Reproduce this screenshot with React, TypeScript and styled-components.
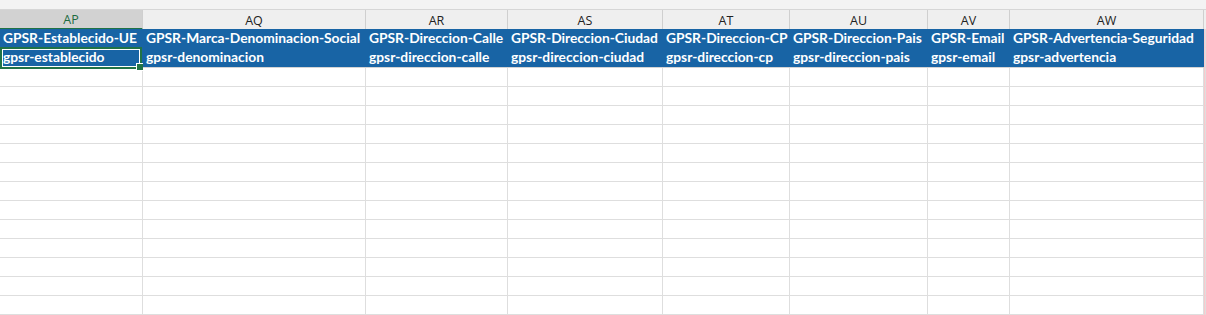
import styled, { createGlobalStyle } from 'styled-components';

const GlobalStyle = createGlobalStyle`
  html, body {
    margin: 0;
    padding: 0;
    background: #ffffff;
    overflow: hidden;
  }
`;

const columns = [
  { id: 'AP', width: 143, title: 'GPSR-Establecido-UE', key: 'gpsr-establecido' },
  { id: 'AQ', width: 223, title: 'GPSR-Marca-Denominacion-Social', key: 'gpsr-denominacion' },
  { id: 'AR', width: 142, title: 'GPSR-Direccion-Calle', key: 'gpsr-direccion-calle' },
  { id: 'AS', width: 155, title: 'GPSR-Direccion-Ciudad', key: 'gpsr-direccion-ciudad' },
  { id: 'AT', width: 127, title: 'GPSR-Direccion-CP', key: 'gpsr-direccion-cp' },
  { id: 'AU', width: 138, title: 'GPSR-Direccion-Pais', key: 'gpsr-direccion-pais' },
  { id: 'AV', width: 82, title: 'GPSR-Email', key: 'gpsr-email' },
  { id: 'AW', width: 194, title: 'GPSR-Advertencia-Seguridad', key: 'gpsr-advertencia' },
];

const template = columns.map((c) => `${c.width}px`).join(' ') + ' 1fr';

const Sheet = styled.div`
  width: 1206px;
  height: 315px;
  overflow: hidden;
  font-family: 'Lato', 'Liberation Sans', sans-serif;
`;

const TopStrip = styled.div`
  height: 10px;
  box-sizing: border-box;
  background: #f3f3f3;
  border-bottom: 1px solid #d6d6d6;
`;

const Row = styled.div<{ $tall?: boolean }>`
  display: grid;
  grid-template-columns: ${template};
  height: ${(p) => (p.$tall ? '20px' : '19px')};
`;

const HeadCell = styled.div<{ $active?: boolean }>`
  box-sizing: border-box;
  display: flex;
  align-items: center;
  justify-content: center;
  padding-top: 1px;
  background: ${(p) => (p.$active ? '#d2d2d2' : '#efefef')};
  border-right: 1px solid #cfcfcf;
  border-bottom: ${(p) => (p.$active ? '2px solid #217346' : '1px solid #d4d4d4')};
  font-family: 'Open Sans', 'Noto Sans', sans-serif;
  font-size: 12.5px;
  color: ${(p) => (p.$active ? '#1d6b3f' : '#222222')};
`;

const BlueCell = styled.div<{ $last?: boolean }>`
  position: relative;
  box-sizing: border-box;
  background: #1864a5;
  border-bottom: 1px solid ${(p) => (p.$last ? '#d4d4d4' : '#1864a5')};
  color: #ffffff;
  font-weight: 700;
  font-size: 13.8px;
  line-height: 18px;
  padding-left: 3px;
  white-space: nowrap;
  overflow: visible;
`;

const Selection = styled.div`
  position: absolute;
  left: 0;
  top: -1px;
  width: 142px;
  height: 22px;
  box-sizing: border-box;
  border: 2px solid #217346;
  box-shadow: inset 0 0 0 1px #ffffff;
  pointer-events: none;
`;

const FillHandle = styled.div`
  position: absolute;
  right: -4px;
  bottom: -4px;
  width: 6px;
  height: 6px;
  background: #217346;
  border: 1px solid #ffffff;
`;

const Cell = styled.div<{ $edge?: boolean }>`
  box-sizing: border-box;
  background: ${(p) => (p.$edge ? '#f9c9cc' : '#ffffff')};
  border-right: 1px solid #dedede;
  border-bottom: 1px solid ${(p) => (p.$edge ? '#f9c9cc' : '#dedede')};
`;

const HeadSpacer = styled.div`
  box-sizing: border-box;
  background: #efefef;
  border-bottom: 1px solid #d4d4d4;
`;

export default function App() {
  const emptyRows = Array.from({ length: 13 }, (_, i) => i);

  return (
    <Sheet>
      <GlobalStyle />
      <TopStrip />
      <Row>
        {columns.map((c) => (
          <HeadCell key={c.id} $active={c.id === 'AP'}>
            {c.id}
          </HeadCell>
        ))}
        <HeadSpacer />
      </Row>
      <Row>
        {columns.map((c) => (
          <BlueCell key={c.id}>{c.title}</BlueCell>
        ))}
        <Cell $edge />
      </Row>
      <Row $tall>
        {columns.map((c) => (
          <BlueCell key={c.id} $last>
            {c.key}
            {c.id === 'AP' && (
              <Selection>
                <FillHandle />
              </Selection>
            )}
          </BlueCell>
        ))}
        <Cell $edge />
      </Row>
      {emptyRows.map((r) => (
        <Row key={r}>
          {columns.map((c) => (
            <Cell key={c.id} />
          ))}
          <Cell $edge />
        </Row>
      ))}
    </Sheet>
  );
}
